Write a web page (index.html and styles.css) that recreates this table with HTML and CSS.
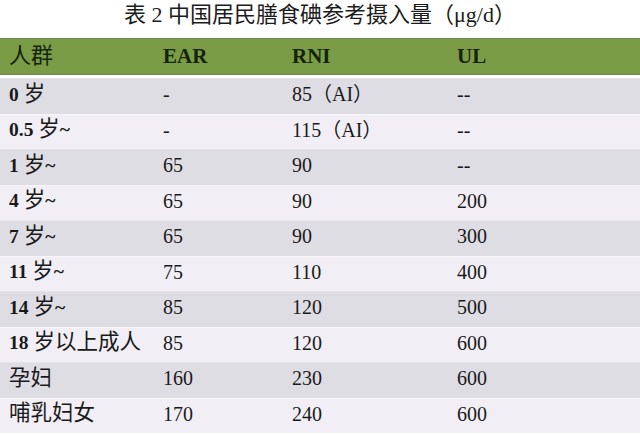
FILE: index.html
```html
<!DOCTYPE html>
<html lang="zh">
<head>
<meta charset="utf-8">
<link rel="stylesheet" href="styles.css">
</head>
<body>
<div class="page">
  <div class="title">表 2 中国居民膳食碘参考摄入量（μg/d）</div>
  <div class="table">
    <div class="row head">
      <div class="c c1"><span class="zh">人群</span></div>
      <div class="c c2"><b>EAR</b></div>
      <div class="c c3"><b>RNI</b></div>
      <div class="c c4"><b>UL</b></div>
    </div>
    <div class="row dark">
      <div class="c c1"><b>0</b> <span class="zh">岁</span></div>
      <div class="c c2">-</div>
      <div class="c c3">85（AI）</div>
      <div class="c c4">--</div>
    </div>
    <div class="row light">
      <div class="c c1"><b>0.5</b> <span class="zh">岁</span><b>~</b></div>
      <div class="c c2">-</div>
      <div class="c c3">115（AI）</div>
      <div class="c c4">--</div>
    </div>
    <div class="row dark">
      <div class="c c1"><b>1</b> <span class="zh">岁</span><b>~</b></div>
      <div class="c c2">65</div>
      <div class="c c3">90</div>
      <div class="c c4">--</div>
    </div>
    <div class="row light">
      <div class="c c1"><b>4</b> <span class="zh">岁</span><b>~</b></div>
      <div class="c c2">65</div>
      <div class="c c3">90</div>
      <div class="c c4">200</div>
    </div>
    <div class="row dark">
      <div class="c c1"><b>7</b> <span class="zh">岁</span><b>~</b></div>
      <div class="c c2">65</div>
      <div class="c c3">90</div>
      <div class="c c4">300</div>
    </div>
    <div class="row light">
      <div class="c c1"><b>11</b> <span class="zh">岁</span><b>~</b></div>
      <div class="c c2">75</div>
      <div class="c c3">110</div>
      <div class="c c4">400</div>
    </div>
    <div class="row dark">
      <div class="c c1"><b>14</b> <span class="zh">岁</span><b>~</b></div>
      <div class="c c2">85</div>
      <div class="c c3">120</div>
      <div class="c c4">500</div>
    </div>
    <div class="row light">
      <div class="c c1"><b>18</b> <span class="zh">岁以上成人</span></div>
      <div class="c c2">85</div>
      <div class="c c3">120</div>
      <div class="c c4">600</div>
    </div>
    <div class="row dark">
      <div class="c c1"><span class="zh">孕妇</span></div>
      <div class="c c2">160</div>
      <div class="c c3">230</div>
      <div class="c c4">600</div>
    </div>
    <div class="row light">
      <div class="c c1"><span class="zh">哺乳妇女</span></div>
      <div class="c c2">170</div>
      <div class="c c3">240</div>
      <div class="c c4">600</div>
    </div>
  </div>
</div>
</body>
</html>
```
FILE: styles.css
```css
html, body {
  margin: 0;
  padding: 0;
  background: #ffffff;
}
body {
  width: 640px;
  height: 435px;
  overflow: hidden;
  font-family: "Liberation Serif", "Noto Sans CJK SC", serif;
  color: #1a1a1a;
}
.page {
  display: flex;
  flex-direction: column;
}
.title {
  height: 38px;
  line-height: 30px;
  text-align: center;
  font-size: 22px;
  color: #1c1c1c;
}
.table {
  display: flex;
  flex-direction: column;
}
.row {
  display: grid;
  grid-template-columns: 163px 129px 165px 1fr;
  align-items: center;
  height: 35.5px;
  box-sizing: border-box;
  font-size: 20px;
  padding-bottom: 4px;
}
.row.head {
  height: 37px;
  background: #7a9c46;
  border-top: 1px solid #6c8750;
  border-bottom: 1px solid #6e8a52;
  color: #15230a;
  margin-bottom: 3px;
  font-size: 21px;
  padding-bottom: 1px;
}
.row.head .zh {
  font-size: 22px;
}
.row.dark {
  background: #dfdde4;
  border-top: 1px solid #e6e4ea;
}
.row.light {
  background: #f1eff5;
  border-top: 1px solid #f7f6f9;
}
.c {
  white-space: nowrap;
  line-height: 24px;
}
.c1 {
  padding-left: 9px;
  font-size: 19.5px;
}
.zh {
  font-size: 21.5px;
}
.c b {
  font-weight: 700;
}
```
